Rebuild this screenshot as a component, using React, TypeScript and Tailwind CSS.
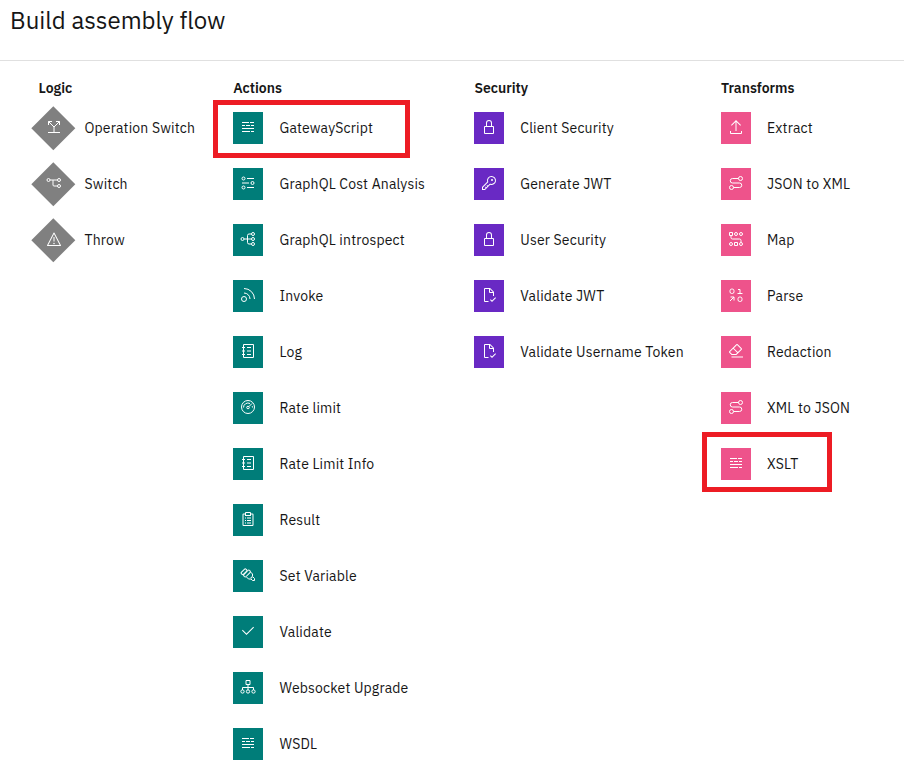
import { ReactNode } from "react";

type Kind = "logic" | "action" | "security" | "transform";
type Item = [label: string, icon: string];

const icons: Record<string, ReactNode> = {
  split: (
    <g fill="none" stroke="currentColor" strokeWidth="2">
      <path d="M4 27h24M16 27V16L5 5M16 16 27 5M5 12V5h7M20 5h7v7" />
    </g>
  ),
  branch: (
    <g fill="none" stroke="currentColor" strokeWidth="2">
      <circle cx="5" cy="10" r="3" /><circle cx="26" cy="10" r="3" /><circle cx="26" cy="22" r="3" />
      <path d="M8 10h15M14 10v10a2 2 0 0 0 2 2h7" />
    </g>
  ),
  warning: (
    <>
      <circle cx="16" cy="25" r="1.5" />
      <path d="M15 12h2v9h-2zM29 30H3a1 1 0 0 1-.887-1.461l13-25a1 1 0 0 1 1.774 0l13 25A1 1 0 0 1 29 30ZM4.65 28h22.7L16.002 6.17Z" />
    </>
  ),
  script: <path d="M4 6h14v2H4zM20 6h8v2h-8zM4 12h6v2H4zM12 12h8v2h-8zM22 12h6v2h-6zM4 18h24v2H4zM4 24h16v2H4zM22 24h6v2h-6z" />,
  cost: (
    <g fill="none" stroke="currentColor" strokeWidth="2">
      <circle cx="7" cy="7" r="3" /><circle cx="25" cy="16" r="3" /><circle cx="7" cy="25" r="3" />
      <path d="M14 7h14M4 16h14M14 25h14" />
    </g>
  ),
  tree: (
    <g fill="none" stroke="currentColor" strokeWidth="2">
      <circle cx="5" cy="16" r="3" /><circle cx="26" cy="6" r="3" /><circle cx="26" cy="16" r="3" /><circle cx="26" cy="26" r="3" />
      <path d="M8 16h15M23 6h-5a3 3 0 0 0-3 3v14a3 3 0 0 0 3 3h5" />
    </g>
  ),
  signal: (
    <g fill="none" stroke="currentColor" strokeWidth="2">
      <circle cx="8" cy="24" r="5" />
      <path d="M8 3a21 21 0 0 1 21 21M8 12a12 12 0 0 1 12 12" />
    </g>
  ),
  log: <path d="M14 8h8v2h-8zM14 15h8v2h-8zM14 22h8v2h-8zM26 2H8a2 2 0 0 0-2 2v4H4v2h2v5H4v2h2v5H4v2h2v4a2 2 0 0 0 2 2h18a2 2 0 0 0 2-2V4a2 2 0 0 0-2-2Zm0 26H8v-4h2v-2H8v-5h2v-2H8v-5h2V8H8V4h18Z" />,
  meter: (
    <g fill="none" stroke="currentColor" strokeWidth="2">
      <circle cx="16" cy="16" r="13" /><circle cx="16" cy="17" r="2.5" />
      <path d="m18 15 6-6M7 17a9 9 0 0 1 13-8M25 17a9 9 0 0 0-.7-3" />
    </g>
  ),
  result: <path d="M10 13h2v2h-2zM14 13h8v2h-8zM10 18h2v2h-2zM14 18h8v2h-8zM10 23h2v2h-2zM14 23h8v2h-8zM25 5h-3V4a2 2 0 0 0-2-2h-8a2 2 0 0 0-2 2v1H7a2 2 0 0 0-2 2v21a2 2 0 0 0 2 2h18a2 2 0 0 0 2-2V7a2 2 0 0 0-2-2ZM12 4h8v4h-8Zm13 24H7V7h3v3h12V7h3Z" />,
  marker: (
    <g fill="none" stroke="currentColor" strokeWidth="2" strokeLinejoin="round">
      <rect x="1.5" y="6.5" width="13" height="6" rx="2.5" transform="rotate(-45 8 9.5)" />
      <rect x="6" y="10" width="16" height="6" rx="2.5" transform="rotate(-45 14 13)" />
      <path d="m13 20 4 4h5l3 3h4v-4l-4-4v-5l-4-4" />
      <circle cx="23" cy="21" r="1" />
    </g>
  ),
  check: <path d="m13 24-9-9 1.414-1.414L13 21.171 26.586 7.586 28 9z" />,
  socket: (
    <g fill="none" stroke="currentColor" strokeWidth="2">
      <path d="M12 3h8v8h-8zM16 11v11M5 22v-5h22v5" />
      <circle cx="5" cy="25" r="3.3" /><circle cx="16" cy="25" r="3.3" /><circle cx="27" cy="25" r="3.3" />
    </g>
  ),
  lock: <path d="M24 14h-2V8a6 6 0 0 0-12 0v6H8a2 2 0 0 0-2 2v12a2 2 0 0 0 2 2h16a2 2 0 0 0 2-2V16a2 2 0 0 0-2-2ZM12 8a4 4 0 0 1 8 0v6h-8Zm12 20H8V16h16Z" />,
  key: (
    <>
      <path d="M21 2a8.998 8.998 0 0 0-8.612 11.612L2 24v6h6l10.388-10.388A9 9 0 1 0 21 2Zm0 16a7.013 7.013 0 0 1-2.032-.302l-1.147-.348-.847.847-3.181 3.181L12.414 20 11 21.414l1.379 1.379-1.586 1.586L9.414 23 8 24.414l1.379 1.379L7.172 28H4v-3.172l9.802-9.802.848-.847-.348-1.147A7 7 0 1 1 21 18Z" />
      <circle cx="22" cy="10" r="2" />
    </>
  ),
  doc: <path d="m22 27.18-2.59-2.59L18 26l4 4 8-8-1.41-1.41ZM15 28H8V4h8v6a2 2 0 0 0 2 2h6v6h2V10a.9.9 0 0 0-.3-.7l-7-7A.9.9 0 0 0 18 2H8a2 2 0 0 0-2 2v24a2 2 0 0 0 2 2h7Zm3-23.6 5.6 5.6H18Z" />,
  extract: <path d="M26 24v4H6v-4H4v4a2 2 0 0 0 2 2h20a2 2 0 0 0 2-2v-4zM6 12l1.41 1.41L15 5.83V24h2V5.83l7.59 7.58L26 12 16 2z" />,
  convert: (
    <g fill="none" stroke="currentColor" strokeWidth="2">
      <circle cx="25" cy="7" r="4" /><circle cx="7" cy="25" r="4" />
      <path d="M21 7H9a4.5 4.5 0 0 0 0 9h14a4.5 4.5 0 0 1 0 9H11" />
    </g>
  ),
  map: (
    <g fill="none" stroke="currentColor" strokeWidth="2">
      <path d="M3 3h6v6H3zM13 23h6v6h-6zM6 9v4a3 3 0 0 0 3 3h14a3 3 0 0 1 3 3v4" />
      <circle cx="16" cy="6" r="3" /><circle cx="26" cy="6" r="3" /><circle cx="6" cy="26" r="3" /><circle cx="26" cy="26" r="3" />
    </g>
  ),
  parse: (
    <g fill="none" stroke="currentColor" strokeWidth="2">
      <rect x="4" y="4" width="8" height="9" rx="3.5" /><rect x="20" y="20" width="8" height="9" rx="3.5" />
      <path d="M20 5h4v8M19 13h10M5 20h7v7M12 20l-8 8" />
    </g>
  ),
  erase: <path d="M7 27h23v2H7zM27.38 10.51l-7.93-7.92a2 2 0 0 0-2.83 0l-14 14a2 2 0 0 0 0 2.83L7.13 24h9.59l10.66-10.66a2 2 0 0 0 0-2.83zM15.89 22H8l-4-4 6.31-6.31 7.93 7.92zm3.76-3.76-7.92-7.93L18 4l8 7.93z" />,
};

const logic: Item[] = [
  ["Operation Switch", "split"],
  ["Switch", "branch"],
  ["Throw", "warning"],
];
const actions: Item[] = [
  ["GatewayScript", "script"],
  ["GraphQL Cost Analysis", "cost"],
  ["GraphQL introspect", "tree"],
  ["Invoke", "signal"],
  ["Log", "log"],
  ["Rate limit", "meter"],
  ["Rate Limit Info", "log"],
  ["Result", "result"],
  ["Set Variable", "marker"],
  ["Validate", "check"],
  ["Websocket Upgrade", "socket"],
  ["WSDL", "script"],
];
const security: Item[] = [
  ["Client Security", "lock"],
  ["Generate JWT", "key"],
  ["User Security", "lock"],
  ["Validate JWT", "doc"],
  ["Validate Username Token", "doc"],
];
const transforms: Item[] = [
  ["Extract", "extract"],
  ["JSON to XML", "convert"],
  ["Map", "map"],
  ["Parse", "parse"],
  ["Redaction", "erase"],
  ["XML to JSON", "convert"],
  ["XSLT", "script"],
];

const tile: Record<Kind, string> = {
  logic: "",
  action: "bg-[#007d79]",
  security: "bg-[#6929c4]",
  transform: "bg-[#ee538b]",
};

const titleInset: Record<Kind, string> = {
  logic: "pl-[7.5px]",
  action: "pl-[0.2px]",
  security: "pl-[0.4px]",
  transform: "",
};

const labelGap: Record<Kind, string> = {
  logic: "ml-[8.5px]",
  action: "ml-[16.5px]",
  security: "ml-[16.3px]",
  transform: "ml-4",
};

function Icon({ name }: { name: string }) {
  return <svg viewBox="0 0 32 32" className="size-4" fill="currentColor">{icons[name]}</svg>;
}

function Column({ title, kind, items, className }: { title: string; kind: Kind; items: Item[]; className: string }) {
  return (
    <section className={`shrink-0 ${className}`}>
      <h2 className={`h-5 text-[14px] leading-5 font-semibold ${titleInset[kind]}`}>{title}</h2>
      <ul className="mt-[14px] flex flex-col gap-6">
        {items.map(([label, icon]) => (
          <li key={label} className="relative flex h-8 items-center whitespace-nowrap">
            {kind === "logic" ? (
              <span className="grid h-[45px] w-[45px] shrink-0 place-items-center text-white">
                <svg viewBox="0 0 45 45" className="col-start-1 row-start-1 size-[45px]" fill="#808080">
                  <path d="M22.3 .2 44.3 22.2 22.3 44.2 .3 22.2z" />
                </svg>
                <span className="col-start-1 row-start-1 -mt-[1.5px]"><Icon name={icon} /></span>
              </span>
            ) : (
              <span className={`flex h-8 w-[30px] shrink-0 justify-center pt-[7px] text-white ${tile[kind]}`}>
                <Icon name={icon} />
              </span>
            )}
            <span className={`text-[14px] leading-5 tracking-[0.16px] ${labelGap[kind]}`}>{label}</span>
            {label === "GatewayScript" && <span className="absolute -top-3 -left-5 h-[58px] w-[197px] border-5 border-[#ed1c24]" />}
            {label === "XSLT" && <span className="absolute -top-4 -left-[19px] h-[60px] w-[130px] border-5 border-[#ed1c24]" />}
          </li>
        ))}
      </ul>
    </section>
  );
}

export default function App() {
  return (
    <main className="h-[775px] w-[904px] overflow-hidden bg-white font-['IBM_Plex_Sans','Noto_Sans',sans-serif] text-[#161616]">
      <header className="flex h-[61px] border-b border-[#e0e0e0] pt-1 pl-[10px]">
        <h1 className="h-8 text-[24px] leading-8">Build assembly flow</h1>
      </header>
      <div className="flex pt-[17px] pl-[31px]">
        <Column title="Logic" kind="logic" items={logic} className="w-[202px]" />
        <Column title="Actions" kind="action" items={actions} className="w-[241px]" />
        <Column title="Security" kind="security" items={security} className="w-[247px]" />
        <Column title="Transforms" kind="transform" items={transforms} className="w-[150px]" />
      </div>
    </main>
  );
}
